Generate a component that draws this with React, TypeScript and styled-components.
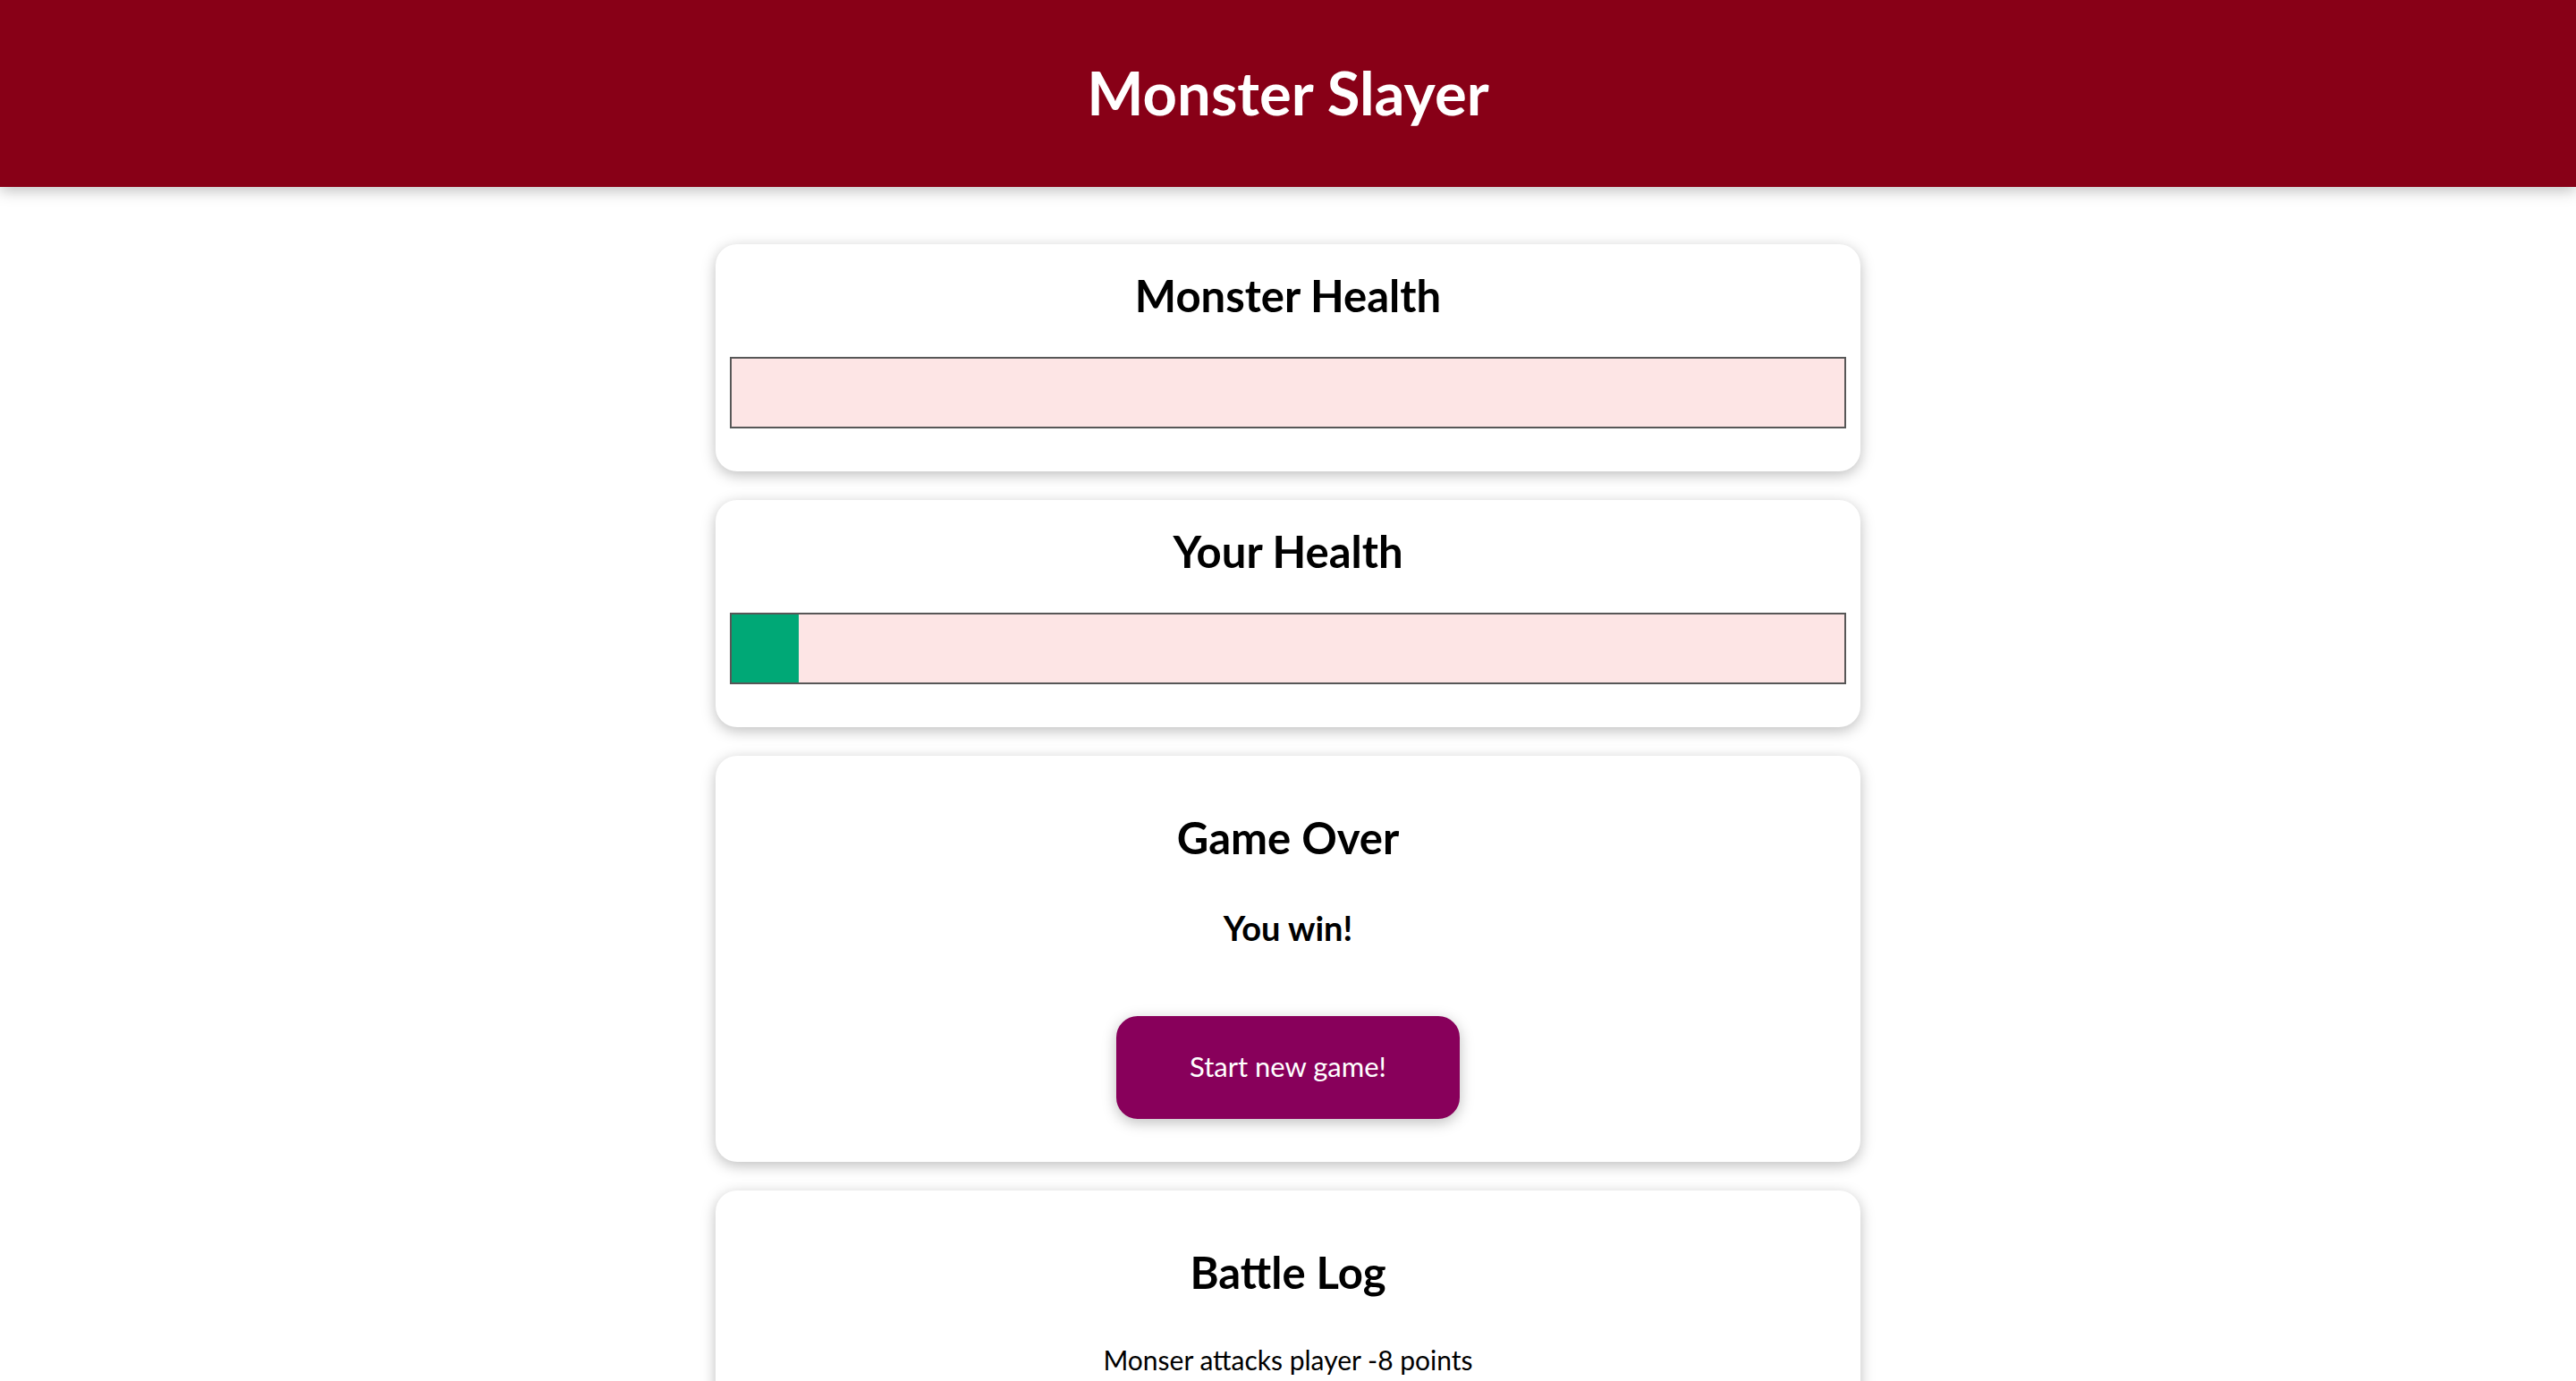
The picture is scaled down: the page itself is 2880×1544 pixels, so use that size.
import React from "react";
import styled, { createGlobalStyle } from "styled-components";

const GlobalStyle = createGlobalStyle`
  html {
    font-family: Lato, "Open Sans", sans-serif;
  }
  body {
    margin: 0;
    background: #ffffff;
    color: #000000;
  }
`;

const Header = styled.header`
  background-color: #880017;
  color: #ffffff;
  text-align: center;
  padding: 65px 16px 67px;
  margin-bottom: 64px;
  box-shadow: 0 4px 16px rgba(0, 0, 0, 0.26);
`;

const AppTitle = styled.h1`
  margin: 0;
  font-size: 67px;
  line-height: 77px;
  font-weight: 700;
`;

const Main = styled.main`
  width: 1280px;
  margin: 0 auto;
  display: flex;
  flex-direction: column;
  gap: 32px;
`;

const Card = styled.section`
  background: #ffffff;
  text-align: center;
  padding: 16px;
  border-radius: 24px;
  box-shadow: 0 4px 16px rgba(0, 0, 0, 0.26);
`;

const CardTitle = styled.h2<{ $top: number }>`
  margin: ${(p) => p.$top}px 0 0;
  font-size: 49px;
  line-height: 58px;
  font-weight: 700;
`;

const HealthBar = styled.div`
  height: 80px;
  box-sizing: border-box;
  border: 2px solid #575757;
  background: #fde5e5;
  margin: 40px 0 32px;
`;

const HealthValue = styled.div`
  height: 100%;
  background-color: #00a876;
`;

const Result = styled.h3`
  margin: 49px 0 0;
  font-size: 38px;
  line-height: 46px;
  font-weight: 700;
`;

const Button = styled.button`
  font: inherit;
  font-size: 31px;
  line-height: 47px;
  border: 2px solid #88005b;
  background-color: #88005b;
  color: #ffffff;
  padding: 31px 0 33px;
  border-radius: 24px;
  margin: 76px auto 32px;
  width: 384px;
  display: block;
  cursor: pointer;
  box-shadow: 0 4px 16px rgba(0, 0, 0, 0.26);
`;

const LogList = styled.ul`
  list-style: none;
  margin: 50px 0 32px;
  padding: 0;
`;

const LogItem = styled.li`
  font-size: 30px;
  line-height: 39px;
  margin: 0 0 16px;
`;

function Health({ title, value }: { title: string; value: number }) {
  return (
    <Card>
      <CardTitle $top={12}>{title}</CardTitle>
      <HealthBar>
        <HealthValue style={{ width: `${value}%` }} />
      </HealthBar>
    </Card>
  );
}

export default function App() {
  const log = ["Monser attacks player -8 points"];
  return (
    <>
      <GlobalStyle />
      <Header>
        <AppTitle>Monster Slayer</AppTitle>
      </Header>
      <Main>
        <Health title="Monster Health" value={0} />
        <Health title="Your Health" value={6} />
        <Card>
          <CardTitle $top={46}>Game Over</CardTitle>
          <Result>You win!</Result>
          <Button>Start new game!</Button>
        </Card>
        <Card>
          <CardTitle $top={46}>Battle Log</CardTitle>
          <LogList>
            {log.map((entry, i) => (
              <LogItem key={i}>{entry}</LogItem>
            ))}
          </LogList>
        </Card>
      </Main>
    </>
  );
}
